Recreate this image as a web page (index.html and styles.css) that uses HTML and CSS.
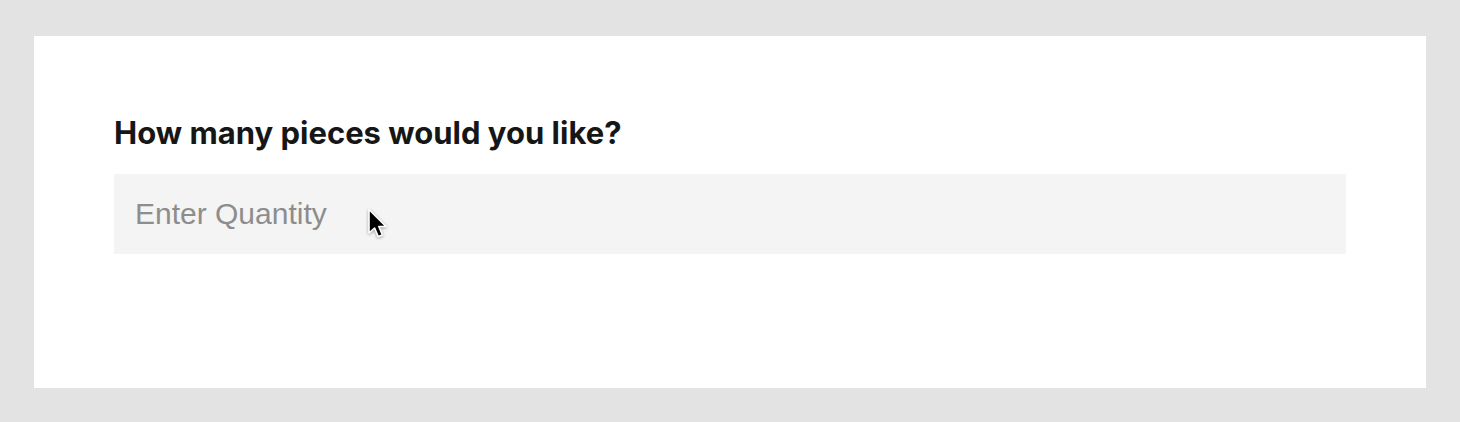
FILE: index.html
```html
<!DOCTYPE html>
<html>
<head>
<meta charset="utf-8">
<link rel="stylesheet" href="styles.css">
</head>
<body>
<div class="card">
  <label class="label" for="qty">How many pieces would you like?</label>
  <div class="field">
    <input id="qty" class="input" type="text" placeholder="Enter Quantity">
    <svg class="cursor" width="24" height="34" viewBox="0 0 24 34">
      <path d="M2 1.5 L2 25 L7.6 20 L11.2 28.6 L15.4 26.9 L11.8 18.5 L19 18.5 Z" fill="#000" stroke="#fff" stroke-width="1.6" stroke-linejoin="round"/>
    </svg>
  </div>
</div>
</body>
</html>
```

FILE: styles.css
```css
html, body {
  margin: 0;
  padding: 0;
  background: #e3e3e3;
}
body {
  padding: 36px 34px 34px 34px;
}
.card {
  background: #fff;
  height: 352px;
  box-sizing: border-box;
  padding: 78px 80px 0 80px;
  display: flex;
  flex-direction: column;
}
.label {
  font-family: Inter, "Liberation Sans", sans-serif;
  font-weight: 700;
  font-size: 31px;
  line-height: 38px;
  color: #161616;
  margin-bottom: 22px;
}
.field {
  position: relative;
}
.input {
  display: block;
  width: 100%;
  height: 80px;
  box-sizing: border-box;
  border: none;
  outline: none;
  background: #f4f4f4;
  padding: 0 21px;
  font-family: "Liberation Sans", Arial, sans-serif;
  font-size: 30px;
  color: #161616;
}
.input::placeholder {
  color: #8d8d8d;
}
.cursor {
  position: absolute;
  left: 253px;
  top: 34px;
  filter: drop-shadow(0 1px 1.5px rgba(0, 0, 0, 0.35));
}
```
